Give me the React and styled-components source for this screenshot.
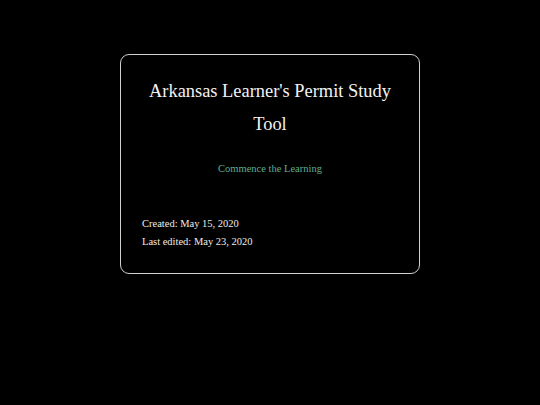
import React from "react";
import styled, { createGlobalStyle } from "styled-components";

const Global = createGlobalStyle`
  html, body { margin: 0; padding: 0; background: #000; }
  body { font-family: "Liberation Serif", "Times New Roman", serif; color: #f0f0f0; }
`;

const Page = styled.div`
  width: 540px;
  height: 405px;
  display: flex;
  justify-content: center;
  align-items: flex-start;
  padding-top: 54px;
  box-sizing: border-box;
`;

const Card = styled.div`
  width: 300px;
  box-sizing: border-box;
  border: 1px solid #cfcfcf;
  border-radius: 9px;
  padding: 20px 21px 22px;
  display: flex;
  flex-direction: column;
`;

const Title = styled.h1`
  margin: 0;
  font-size: 18.4px;
  font-weight: normal;
  line-height: 33px;
  text-align: center;
  color: #f2f2f2;
`;

const Link = styled.a`
  margin-top: 19px;
  font-size: 10.5px;
  line-height: 18px;
  text-align: center;
  color: #5fae93;
  text-decoration: none;
`;

const Meta = styled.div`
  margin-top: 37px;
  display: flex;
  flex-direction: column;
`;

const MetaLine = styled.p`
  margin: 0;
  font-size: 10.5px;
  line-height: 18px;
  color: #ececec;
`;

export default function App() {
  return (
    <>
      <Global />
      <Page>
        <Card>
          <Title>Arkansas Learner's Permit Study Tool</Title>
          <Link href="#">Commence the Learning</Link>
          <Meta>
            <MetaLine>Created: May 15, 2020</MetaLine>
            <MetaLine>Last edited: May 23, 2020</MetaLine>
          </Meta>
        </Card>
      </Page>
    </>
  );
}
